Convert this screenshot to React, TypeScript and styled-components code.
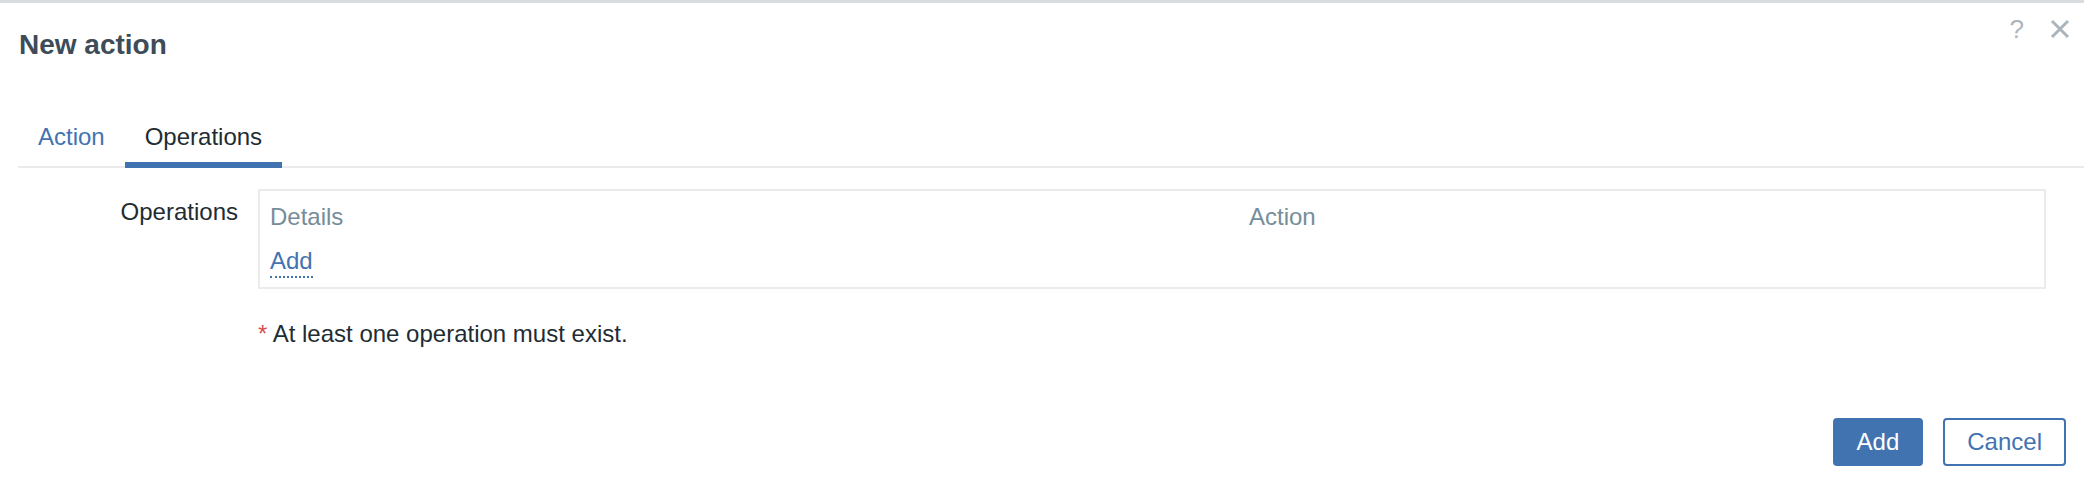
import React from "react";
import styled, { createGlobalStyle, css } from "styled-components";

interface tabProps {
  active?: boolean;
}

interface buttonProps {
  primary?: boolean;
}

const GlobalStyle = createGlobalStyle`
  html, body {
    margin: 0;
    padding: 0;
    background: #fff;
  }
  body {
    font-family: "Liberation Sans", Arial, sans-serif;
    color: #1f2c33;
  }
`;

const Dialog = styled.div`
  box-sizing: border-box;
  width: 2084px;
  height: 484px;
  border-top: 3px solid #d9dde0;
  display: flex;
  flex-direction: column;
`;

const Header = styled.div`
  display: flex;
  align-items: flex-start;
  padding: 16px 14px 0 19px;
`;

const Title = styled.h4`
  margin: 6px 0 0;
  font-size: 28px;
  line-height: 40px;
  font-weight: bold;
  color: #3d4c58;
`;

const HeaderControls = styled.div`
  margin-left: auto;
  display: flex;
  align-items: center;
  gap: 26px;
  color: #acb5bc;
`;

const HelpIcon = styled.span`
  font-size: 26px;
  line-height: 20px;
  height: 20px;
`;

const CloseIcon = styled.svg`
  width: 20px;
  height: 20px;
  display: block;
`;

const TabList = styled.div`
  display: flex;
  margin: 54px 0 0 18px;
  border-bottom: 2px solid #ebebeb;
`;

const Tab = styled.div<tabProps>`
  padding: 0 20px 7px;
  font-size: 24px;
  line-height: 36px;
  margin-bottom: -2px;
  border-bottom: 6px solid transparent;
  ${({ active }) =>
    active
      ? css`
          color: #1f2c33;
          border-bottom-color: #4273b1;
        `
      : css`
          color: #4273b1;
        `}
`;

const Form = styled.div`
  display: grid;
  grid-template-columns: 220px 1fr;
  column-gap: 20px;
  row-gap: 27px;
  margin: 21px 38px 0 18px;
`;

const Label = styled.div`
  text-align: right;
  padding-top: 5px;
  font-size: 24px;
  line-height: 36px;
`;

const OperationsBox = styled.div`
  border: 2px solid #ebebeb;
  padding: 4px 0;
  display: grid;
  grid-template-columns: 979px 1fr;
`;

const HeadCell = styled.div`
  padding: 4px 10px;
  font-size: 24px;
  line-height: 36px;
  color: #768d99;
`;

const Cell = styled.div`
  padding: 4px 10px;
  font-size: 24px;
  line-height: 36px;
`;

const LinkAction = styled.span`
  color: #4273b1;
  border-bottom: 2px dotted #4273b1;
  padding-bottom: 2px;
  cursor: pointer;
`;

const Note = styled.div`
  grid-column: 2;
  font-size: 24px;
  line-height: 36px;
`;

const Asterisk = styled.span`
  color: #d64e4e;
`;

const Footer = styled.div`
  margin-top: auto;
  display: flex;
  justify-content: flex-end;
  gap: 20px;
  padding: 0 18px 18px;
`;

const Button = styled.button<buttonProps>`
  box-sizing: border-box;
  height: 48px;
  padding: 0 22px;
  border-radius: 4px;
  border: 2px solid #4273b1;
  font-family: "Liberation Sans", Arial, sans-serif;
  font-size: 24px;
  ${({ primary }) =>
    primary
      ? css`
          background: #4273b1;
          color: #fff;
        `
      : css`
          background: #fff;
          color: #4273b1;
        `}
`;

function App() {
  return (
    <>
      <GlobalStyle />
      <Dialog>
        <Header>
          <Title>New action</Title>
          <HeaderControls>
            <HelpIcon>?</HelpIcon>
            <CloseIcon viewBox="0 0 20 20">
              <path
                d="M2 2 L18 18 M18 2 L2 18"
                stroke="currentColor"
                strokeWidth="3"
                fill="none"
              />
            </CloseIcon>
          </HeaderControls>
        </Header>

        <TabList>
          <Tab>Action</Tab>
          <Tab active>Operations</Tab>
        </TabList>

        <Form>
          <Label>Operations</Label>
          <OperationsBox>
            <HeadCell>Details</HeadCell>
            <HeadCell>Action</HeadCell>
            <Cell>
              <LinkAction>Add</LinkAction>
            </Cell>
            <Cell />
          </OperationsBox>
          <Note>
            <Asterisk>*</Asterisk> At least one operation must exist.
          </Note>
        </Form>

        <Footer>
          <Button primary>Add</Button>
          <Button>Cancel</Button>
        </Footer>
      </Dialog>
    </>
  );
}

export default App;
